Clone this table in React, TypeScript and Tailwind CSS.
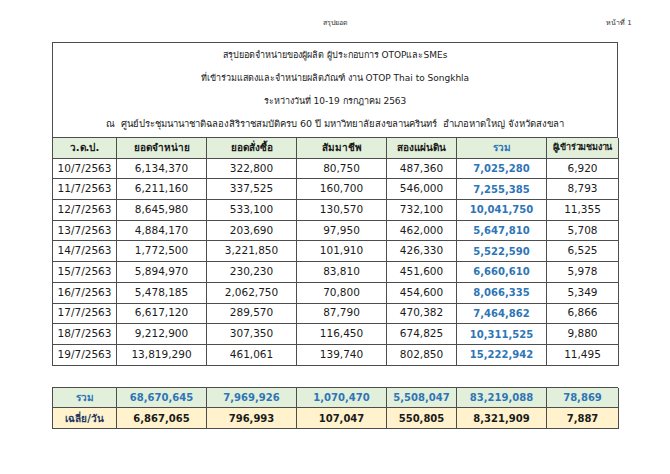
import React from "react";

const rows = [
  ["10/7/2563", "6,134,370", "322,800", "80,750", "487,360", "7,025,280", "6,920"],
  ["11/7/2563", "6,211,160", "337,525", "160,700", "546,000", "7,255,385", "8,793"],
  ["12/7/2563", "8,645,980", "533,100", "130,570", "732,100", "10,041,750", "11,355"],
  ["13/7/2563", "4,884,170", "203,690", "97,950", "462,000", "5,647,810", "5,708"],
  ["14/7/2563", "1,772,500", "3,221,850", "101,910", "426,330", "5,522,590", "6,525"],
  ["15/7/2563", "5,894,970", "230,230", "83,810", "451,600", "6,660,610", "5,978"],
  ["16/7/2563", "5,478,185", "2,062,750", "70,800", "454,600", "8,066,335", "5,349"],
  ["17/7/2563", "6,617,120", "289,570", "87,790", "470,382", "7,464,862", "6,866"],
  ["18/7/2563", "9,212,900", "307,350", "116,450", "674,825", "10,311,525", "9,880"],
  ["19/7/2563", "13,819,290", "461,061", "139,740", "802,850", "15,222,942", "11,495"],
];

const headers = ["ว.ด.ป.", "ยอดจำหน่าย", "ยอดสั่งซื้อ", "สัมมาชีพ", "สองแผ่นดิน", "รวม", "ผู้เข้าร่วมชมงาน"];

const total = ["รวม", "68,670,645", "7,969,926", "1,070,470", "5,508,047", "83,219,088", "78,869"];
const average = ["เฉลี่ย/วัน", "6,867,065", "796,993", "107,047", "550,805", "8,321,909", "7,887"];

const cols = "grid grid-cols-[64px_90px_90px_90px_70px_90px_72px]";
const cell = "flex h-[20.7px] items-center justify-center whitespace-nowrap border-r border-b border-[#4d4d4d]";

export default function App() {
  return (
    <div className="h-[474px] w-[670px] bg-white text-[#1a1a1a]" style={{ fontFamily: '"DejaVu Sans", "Noto Sans", sans-serif' }}>
      <div className="relative h-[42px]">
        <span className="absolute left-[323px] top-[18px] text-[7px] text-[#333]">สรุปยอด</span>
        <span className="absolute left-[606px] top-[18px] text-[7px] text-[#333]">หน้าที่ 1</span>
      </div>

      <div className="ml-[52px] w-[566px]">
        <div className="flex h-[95px] flex-col items-center justify-center gap-[9px] border border-b-0 border-[#4d4d4d] pb-[2px] text-[9.5px] leading-[14px]">
          <div className="text-[9px]">สรุปยอดจำหน่ายของผู้ผลิต ผู้ประกอบการ OTOPและSMEs</div>
          <div className="text-[9px]">ที่เข้าร่วมแสดงและจำหน่ายผลิตภัณฑ์ งาน OTOP Thai to Songkhla</div>
          <div className="text-[9px]">ระหว่างวันที่ 10-19 กรกฎาคม 2563</div>
          <div>ณ&nbsp; ศูนย์ประชุมนานาชาติฉลองสิริราชสมบัติครบ 60 ปี มหาวิทยาลัยสงขลานครินทร์&nbsp; อำเภอหาดใหญ่ จังหวัดสงขลา</div>
        </div>

        <div className={`${cols} border-l border-t border-[#4d4d4d]`}>
          {headers.map((h, i) => (
            <div
              key={h}
              className={`${cell} bg-[#e2efda] font-bold ${i === 6 ? "text-[9px] tracking-[-0.2px]" : "text-[10px]"} ${i === 5 ? "text-[#2e75b6]" : ""}`}
            >
              {h}
            </div>
          ))}
          {rows.map((r) =>
            r.map((v, i) => (
              <div key={r[0] + i} className={`${cell} ${i === 5 ? "text-[10px] font-bold text-[#2e75b6]" : "text-[10.5px]"}`}>
                {v}
              </div>
            ))
          )}
        </div>

        <div className={`${cols} mt-[21px] border-l border-t border-[#4d4d4d] text-[10px] font-bold`}>
          {total.map((v, i) => (
            <div key={"t" + i} className={`${cell} bg-[#e2efda] text-[#2e75b6]`}>
              {v}
            </div>
          ))}
          {average.map((v, i) => (
            <div key={"a" + i} className={`${cell} bg-[#fff2cc] ${i === 0 ? "text-[#1f3864]" : "text-[#1a1a1a]"}`}>
              {v}
            </div>
          ))}
        </div>
      </div>
    </div>
  );
}
